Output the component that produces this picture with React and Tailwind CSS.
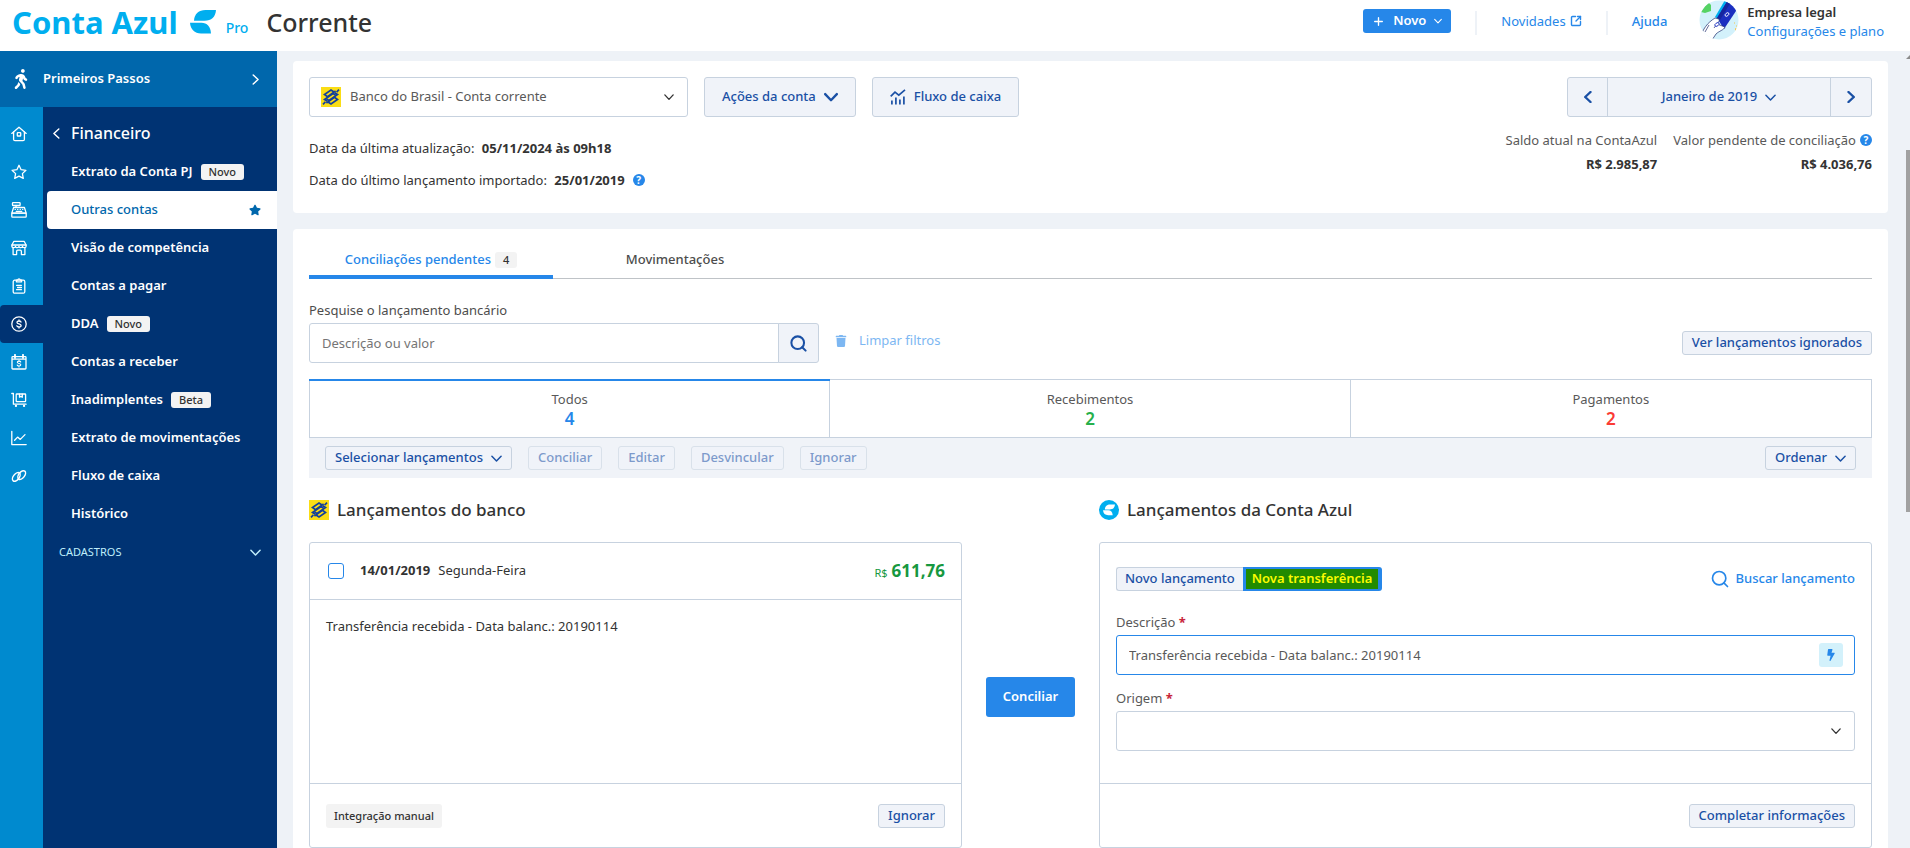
import React, { useState } from 'react';
import { Plus, Search, SquareArrowOutUpRight } from 'lucide-react';
import { FaTrash, FaBolt, FaStar, FaWalking } from 'react-icons/fa';

const RailIcon = ({ children }) => (
    <svg viewBox="0 0 16 16" width="16" height="16" fill="none" stroke="currentColor" strokeWidth="1.3" strokeLinecap="round" strokeLinejoin="round">
        {children}
    </svg>
);

const railItems = [
    {
        label: 'Início',
        icon: <><path d="M.8 7.4 8 1.2l7.2 6.2" /><path d="M2.6 6v7.2c0 .9.5 1.5 1.4 1.5h8c.9 0 1.4-.6 1.4-1.5V6" /><rect x="6.3" y="6.6" width="3.4" height="3.4" rx=".6" /></>
    },
    {
        label: 'Favoritos',
        icon: <path d="M8 1.3l2.1 4.4 4.8.6-3.5 3.3.9 4.8L8 12.1l-4.3 2.3.9-4.8L1.1 6.3l4.8-.6z" />
    },
    {
        label: 'Vendas',
        icon: <><rect x="1.5" y=".7" width="7.6" height="2.8" rx=".6" /><path d="M5 3.5v2M2.6 5.5h10.8l1.8 5.6H.8z" /><rect x=".8" y="11.1" width="14.4" height="4" rx=".7" /><path d="M4.2 7.4h.1M6.7 7.4h.1M9.2 7.4h.1M11.7 7.4h.1M5.2 9.3h5.6" /></>
    },
    {
        label: 'Loja',
        icon: <><path d="M2.9 1.3h10.2l2 3.7v1.2c0 .9-.8 1.5-1.8 1.5s-1.8-.6-1.8-1.5c0 .9-.8 1.5-1.8 1.5S8 7.1 8 6.2c0 .9-.8 1.5-1.8 1.5s-1.7-.6-1.7-1.5c0 .9-.9 1.5-1.9 1.5S.9 7.1.9 6.2V5z" /><path d="M1 5h14M2.1 8v6.6h3.5v-3.2c0-.7.5-1.2 1.2-1.2h2.4c.7 0 1.2.5 1.2 1.2v3.2h3.5V8" /></>
    },
    {
        label: 'Contratos',
        icon: <><rect x="2.2" y="2.2" width="11.6" height="13" rx="1.5" /><path d="M5.4 3.8V2.2h1.3C6.9 1.3 7.3.8 8 .8s1.1.5 1.3 1.4h1.3v1.6zM5.6 7.3h4.8M6.6 9.5h3.8M5.6 11.7h4.8" /></>
    },
    {
        label: 'Financeiro',
        active: true,
        icon: <><circle cx="8" cy="8" r="7.2" /><path d="M10 6.1C9.7 5.4 9 5 8 5 6.9 5 6 5.5 6 6.4c0 2 4.1 1.1 4.1 3.1C10.1 10.5 9.2 11 8 11c-1.1 0-1.9-.5-2.2-1.2M8 4v1M8 11v1" /></>
    },
    {
        label: 'Cobranças',
        icon: <><path d="M1 5.2h14M1.8 2.7h12.4c.5 0 .8.3.8.8v10.7c0 .5-.3.8-.8.8H1.8c-.5 0-.8-.3-.8-.8V3.5c0-.5.3-.8.8-.8z" /><path d="M4 .8v3.2M12 .8v3.2" strokeWidth="1.8" /><path d="M9.7 8c-.2-.6-.8-.9-1.7-.9-1 0-1.7.4-1.7 1.2 0 1.7 3.5.8 3.5 2.5 0 .8-.8 1.2-1.8 1.2-.9 0-1.6-.3-1.8-1M8 6.3v.8M8 12v.9" strokeWidth="1.1" /></>
    },
    {
        label: 'Compras',
        icon: <><path d="M.8 1.5h1.6v10.7h12.7" /><rect x="5.2" y="2" width="9.4" height="7.6" rx=".6" /><path d="M8.5 2.2v3l1.4-.8 1.4.8v-3" /><path d="M4.9 13.9h.1M13 13.9h.1" strokeWidth="2.2" /></>
    },
    {
        label: 'Relatórios',
        icon: <path d="M.8 1.3v13.3h14.4M3.6 10.3l3-3.2 2.7 2.3L14 4.6" />
    },
    {
        label: 'Integrações',
        icon: <><ellipse cx="5.3" cy="8.9" rx="2.9" ry="5" transform="rotate(38 5.3 8.9)" strokeWidth="1.5" /><ellipse cx="10.7" cy="7.1" rx="2.9" ry="5" transform="rotate(38 10.7 7.1)" strokeWidth="1.5" /></>
    }
];

const menuItems = [
    { label: 'Extrato da Conta PJ', badge: 'Novo' },
    { label: 'Outras contas', active: true },
    { label: 'Visão de competência' },
    { label: 'Contas a pagar' },
    { label: 'DDA', badge: 'Novo' },
    { label: 'Contas a receber' },
    { label: 'Inadimplentes', badge: 'Beta' },
    { label: 'Extrato de movimentações' },
    { label: 'Fluxo de caixa' },
    { label: 'Histórico' }
];

const filters = [
    { id: 'todos', label: 'Todos', count: 4, color: 'text-[#2687e9]' },
    { id: 'recebimentos', label: 'Recebimentos', count: 2, color: 'text-[#27b04b]' },
    { id: 'pagamentos', label: 'Pagamentos', count: 2, color: 'text-[#fb3b34]' }
];

const Chevron = ({ className = 'size-[11px]', weight = 1.6 }) => (
    <svg viewBox="0 0 12 12" className={`shrink-0 ${className}`} fill="none" stroke="currentColor" strokeWidth={weight} strokeLinecap="round" strokeLinejoin="round" aria-hidden="true">
        <path d="M1 3.5 6 8.8l5-5.3" />
    </svg>
);

const BankLogo = () => (
    <svg viewBox="0 0 20 20" className="size-5 shrink-0" aria-hidden="true">
        <rect width="20" height="20" fill="#fadd15" />
        <g fill="none" stroke="#123f9b" strokeWidth="1.7">
            <path d="M12.6 4.7 10 3 3.5 7.5l3 2.1L14.6 4" />
            <path d="M7.4 15.3 10 17l6.5-4.5-3-2.1L5.4 16" />
            <path d="M13.8 5.7 16.5 7.5 8 13.4 5.5 11.9" />
            <path d="M6.2 14.3 3.5 12.5 12 6.6l2.5 1.5" />
            <path d="M15.6 5.1 18 2.7M4.4 14.9 2 17.3" />
        </g>
    </svg>
);

const Leaf = ({ className }) => (
    <svg viewBox="0 0 26 24" className={className} fill="currentColor" aria-hidden="true">
        <path d="M26 0H15.5C9 0 4.2 3.8 4 10.8h10.5C21.5 10.8 25.5 6.8 26 0z" />
        <path d="M0 12.8h11.500c5.500 0 9 3.600 9.500 10.700H11C4.500 23.500.5 19.500 0 12.800z" />
    </svg>
);

const Avatar = () => (
    <svg viewBox="0 0 40 40" className="size-10 shrink-0" aria-hidden="true">
        <clipPath id="avatar"><circle cx="20" cy="20" r="19.5" /></clipPath>
        <g clipPath="url(#avatar)">
            <rect width="40" height="40" fill="#d3f1fb" />
            <path d="M2 12 9 2l3 3v6l-6 2z" fill="#56d364" />
            <path d="M16 17 26 0h4L19 19z" fill="#00aeef" />
            <path d="M18 18 29 0l10 8-14 21z" fill="#1c2fc0" />
            <path d="m18 18 11-18 3 2-11 18z" fill="#17259c" />
            <path d="M1 38C4 29 8 23 16 18l4 1c1 2-1 3-2 5l8 3c-1 3-6 4-9 7l-4 6H1z" fill="#fff" stroke="#1d2a6b" strokeWidth=".7" />
            <path d="m10 25-4 7M18 24l-3 4" fill="none" stroke="#1d2a6b" strokeWidth=".7" />
            <ellipse cx="18" cy="24.5" rx="2.4" ry="1.5" fill="#fff" stroke="#1c2fc0" strokeWidth=".9" transform="rotate(-35 18 24.5)" />
            <ellipse cx="28" cy="14.5" rx="2.2" ry="1.4" fill="none" stroke="#fff" strokeWidth=".9" transform="rotate(-40 28 14.5)" />
            <path d="m35 22 1 1-1 1zM37 25l1 1-1 1zM36 28l2 1-2 2z" fill="#f6c445" />
        </g>
    </svg>
);

const ChartIcon = () => (
    <svg viewBox="0 0 16 16" className="size-4" fill="none" stroke="currentColor" strokeWidth="1.7" aria-hidden="true">
        <path d="M.7 7.3 5 3.1l3.8 3L15 .9" />
        <path d="M1.9 15.5v-4M5.9 15.5v-7M9.9 15.5v-5M13.9 15.5v-8" />
    </svg>
);

const HelpDot = () => (
    <button type="button" aria-label="Ajuda" className="flex size-3 items-center justify-center rounded-full bg-[#2687e9] text-[10px] leading-3 font-bold text-white">
        ?
    </button>
);

const SmallButton = ({ children, disabled }) => (
    <button
        type="button"
        disabled={disabled}
        className="flex h-6 items-center gap-2 rounded-[3px] border border-[#c7d2df] bg-[#f0f3f9] px-[9px] font-medium whitespace-nowrap text-[#1a50a5] disabled:border-[#d9e1ea] disabled:text-[#7d9acb]"
    >
        {children}
    </button>
);

const Header = () => (
    <header className="flex h-[51px] shrink-0 items-start bg-white pr-[26px] pl-3">
        <div className="flex items-center text-[#00aeef]">
            <a href="#" className="flex items-center gap-3 text-[31px] leading-[44px] font-bold">
                Conta Azul
                <Leaf className="h-6 w-[26px]" />
            </a>
            <span className="mt-3 ml-2.5 text-sm font-medium">Pro</span>
        </div>
        <h1 className="ml-[18px] text-[25px] leading-[44px] font-medium text-[#333]">Corrente</h1>
        <div className="ml-auto flex items-start">
            <button type="button" className="mt-[9px] flex h-6 items-center gap-2 rounded-[3px] bg-[#2687e9] px-[9px] font-semibold text-white">
                <Plus size={13} strokeWidth={2.5} />
                Novo
                <Chevron className="size-2" />
            </button>
            <span className="mt-[11px] ml-6 h-6 w-0.5 bg-[#eef2f7]" />
            <a href="#" className="mt-[11px] ml-6 flex items-center gap-1 leading-5 text-[#2687e9]">
                Novidades
                <SquareArrowOutUpRight size={12} strokeWidth={2.8} />
            </a>
            <span className="mt-[11px] ml-6 h-6 w-0.5 bg-[#eef2f7]" />
            <a href="#" className="mt-[11px] ml-6 leading-5 font-medium text-[#2687e9]">Ajuda</a>
            <div className="ml-8 flex gap-2">
                <Avatar />
                <div className="pt-[3px] leading-[19px]">
                    <p className="font-semibold text-[#333]">Empresa legal</p>
                    <a href="#" className="text-[#2687e9]">Configurações e plano</a>
                </div>
            </div>
        </div>
    </header>
);

const Sidebar = () => (
    <aside className="flex w-[277px] shrink-0 flex-col font-semibold text-white">
        <a href="#" className="flex h-14 shrink-0 items-center bg-[#0067ac] pr-4 pl-[11px]">
            <FaWalking size={20} />
            <span className="ml-3">Primeiros Passos</span>
            <Chevron className="ml-auto size-[11px] -rotate-90" />
        </a>
        <div className="flex min-h-0 flex-1">
            <nav aria-label="Módulos" className="w-[43px] shrink-0 bg-[#008acf] pt-2">
                {railItems.map(({ label, icon, active }) => (
                    <a
                        key={label}
                        href="#"
                        aria-label={label}
                        className={active ? 'flex h-[38px] items-center rounded-l bg-[#003373] pl-[11px]' : 'flex h-[38px] items-center pl-[11px]'}
                    >
                        <RailIcon>{icon}</RailIcon>
                    </a>
                ))}
            </nav>
            <nav aria-label="Financeiro" className="flex-1 bg-[#003373] pt-2">
                <button type="button" className="flex h-9 items-center gap-[9px] pl-2 text-base font-medium">
                    <Chevron className="size-[11px] rotate-90" />
                    Financeiro
                </button>
                <div className="mt-0.5">
                    {menuItems.map(({ label, badge, active }) => (
                        <a
                            key={label}
                            href="#"
                            className={
                                active
                                    ? 'ml-1 flex h-[38px] items-center rounded-l bg-white pr-4 pl-6 font-medium text-[#0067ac]'
                                    : 'flex h-[38px] items-center gap-2 pl-7'
                            }
                        >
                            {label}
                            {badge && <span className="rounded-[3px] bg-[#f3f3f3] px-2 text-[11px] leading-4 font-medium text-[#333]">{badge}</span>}
                            {active && <FaStar size={12} className="ml-auto" />}
                        </a>
                    ))}
                </div>
                <button type="button" className="flex h-[38px] w-full items-center justify-between pr-4 pl-4 text-[11px] font-normal text-[#bfeefb]">
                    CADASTROS
                    <Chevron className="size-[11px]" />
                </button>
            </nav>
        </div>
    </aside>
);

const AccountCard = () => (
    <section className="flex h-[152px] shrink-0 items-start justify-between rounded bg-white p-4">
        <div>
            <div className="flex gap-4">
                <div className="relative w-[379px]">
                    <select aria-label="Conta" className="h-10 w-full appearance-none rounded-[3px] border border-[#c7d2df] bg-white pr-8 pl-10 text-[#595959]">
                        <option>Banco do Brasil - Conta corrente</option>
                    </select>
                    <span className="pointer-events-none absolute inset-y-0 left-3 flex items-center"><BankLogo /></span>
                    <Chevron className="pointer-events-none absolute inset-y-0 right-3.5 my-auto size-2.5 text-[#333]" />
                </div>
                <button type="button" className="flex h-10 items-center gap-2 rounded-[3px] border border-[#c7d2df] bg-[#f0f3f9] px-[17px] font-medium text-[#1a50a5]">
                    Ações da conta
                    <Chevron className="size-3.5" weight={2} />
                </button>
                <button type="button" className="flex h-10 items-center gap-2 rounded-[3px] border border-[#c7d2df] bg-[#f0f3f9] px-[17px] font-medium text-[#1a50a5]">
                    <ChartIcon />
                    Fluxo de caixa
                </button>
            </div>
            <div className="mt-[15px] leading-8">
                <p>Data da última atualização: <b className="ml-1 font-bold">05/11/2024 às 09h18</b></p>
                <p className="flex items-center gap-2">
                    <span>Data do último lançamento importado: <b className="ml-1 font-bold">25/01/2019</b></span>
                    <HelpDot />
                </p>
            </div>
        </div>
        <div className="flex flex-col items-end">
            <div className="flex h-10 w-[305px] divide-x divide-[#c7d2df] rounded-[3px] border border-[#c7d2df] bg-[#f0f3f9] font-medium text-[#1a50a5]">
                <button type="button" aria-label="Mês anterior" className="flex w-10 items-center justify-center"><Chevron className="size-3 rotate-90" weight={2.4} /></button>
                <button type="button" className="flex flex-1 items-center justify-center gap-2">
                    Janeiro de 2019
                    <Chevron />
                </button>
                <button type="button" aria-label="Próximo mês" className="flex w-10 items-center justify-center"><Chevron className="size-3 -rotate-90" weight={2.4} /></button>
            </div>
            <dl className="mt-[11px] flex gap-4 text-right leading-6">
                <div>
                    <dt className="text-[#595959]">Saldo atual na ContaAzul</dt>
                    <dd className="font-bold">R$ 2.985,87</dd>
                </div>
                <div>
                    <dt className="flex items-center gap-1 text-[#595959]">Valor pendente de conciliação <HelpDot /></dt>
                    <dd className="font-bold">R$ 4.036,76</dd>
                </div>
            </dl>
        </div>
    </section>
);

const BankEntry = () => (
    <article className="rounded-[3px] border border-[#c7d2df]">
        <div className="flex h-[57px] items-center border-b border-[#c7d2df] pr-4 pl-[18px]">
            <input type="checkbox" id="entry" className="size-4 appearance-none rounded-[3px] border border-[#2687e9] bg-white checked:bg-[#2687e9]" />
            <label htmlFor="entry" className="ml-4"><b className="mr-2 font-bold">14/01/2019</b>Segunda-Feira</label>
            <p className="ml-auto flex items-baseline gap-1 text-[#17983f]">
                <span className="text-[11px]">R$</span>
                <b className="text-[17px] font-bold">611,76</b>
            </p>
        </div>
        <div className="h-[184px] border-b border-[#c7d2df] p-4">
            <p className="leading-5">Transferência recebida - Data balanc.: 20190114</p>
        </div>
        <div className="flex h-[63px] items-center justify-between px-4">
            <span className="rounded-[3px] bg-[#f3f3f3] px-2 text-[11px] leading-6 font-medium">Integração manual</span>
            <SmallButton>Ignorar</SmallButton>
        </div>
    </article>
);

const ContaAzulEntry = () => {
    const [description, setDescription] = useState('Transferência recebida - Data balanc.: 20190114');

    return (
        <article className="rounded-[3px] border border-[#c7d2df]">
            <div className="h-[241px] border-b border-[#c7d2df] px-4 pt-6">
                <div className="flex h-6 items-center justify-between">
                    <div className="flex h-6 font-medium">
                        <button type="button" className="rounded-l-[3px] border border-r-0 border-[#c7d2df] bg-[#f0f3f9] px-2 text-[#1a50a5]">Novo lançamento</button>
                        <button type="button" className="flex rounded-r-[3px] bg-[#2687e9] py-0.5 pr-1 pl-[3px] font-semibold text-[#fcfc00]">
                            <span className="flex h-5 items-center bg-[#228b00] px-1.5">Nova transferência</span>
                        </button>
                    </div>
                    <button type="button" className="flex items-center gap-1.5 font-medium text-[#2687e9]">
                        <Search size={20} strokeWidth={2} />
                        Buscar lançamento
                    </button>
                </div>
                <label htmlFor="description" className="mt-[21px] block leading-5 text-[#595959]">Descrição <span className="font-bold text-[#c8253a]">*</span></label>
                <div className="relative mt-[3px]">
                    <input
                        id="description"
                        type="text"
                        value={description}
                        onChange={e => setDescription(e.target.value)}
                        className="h-10 w-full rounded-[3px] border border-[#2687e9] pr-12 pl-3 text-[#595959]"
                    />
                    <span className="absolute inset-y-0 right-3 my-auto flex size-6 items-center justify-center rounded-[3px] bg-[#d3f1fb] text-[#2687e9]"><FaBolt size={12} /></span>
                </div>
                <label htmlFor="origin" className="mt-[13px] block leading-5 text-[#595959]">Origem <span className="font-bold text-[#c8253a]">*</span></label>
                <div className="relative mt-[3px]">
                    <select id="origin" className="h-10 w-full appearance-none rounded-[3px] border border-[#c7d2df] bg-white px-3">
                        <option></option>
                    </select>
                    <Chevron className="pointer-events-none absolute inset-y-0 right-3.5 my-auto size-2.5 text-[#333]" />
                </div>
            </div>
            <div className="flex h-[63px] items-center justify-end px-4">
                <SmallButton>Completar informações</SmallButton>
            </div>
        </article>
    );
};

const Reconciliation = () => {
    const [filter, setFilter] = useState('todos');

    return (
        <section className="rounded bg-white px-4 pb-4">
            {/* Tabs */}
            <div className="flex h-[50px] font-medium shadow-[inset_0_-1px_0_#bfc3c7]">
                <button type="button" className="flex w-[244px] items-center justify-center gap-1 border-b-4 border-[#2687e9] pt-4 text-[#2687e9]">
                    Conciliações pendentes
                    <span className="rounded-[3px] bg-[#f3f3f3] px-2 text-[11px] leading-4 text-[#333]">4</span>
                </button>
                <button type="button" className="flex w-[244px] items-center justify-center border-b-4 border-transparent pt-4 text-[#4d4d4d]">Movimentações</button>
            </div>

            {/* Search */}
            <label htmlFor="search" className="mt-[21px] block leading-5 text-[#4d4d4d]">Pesquise o lançamento bancário</label>
            <div className="mt-[3px] flex h-10 items-center">
                <input id="search" type="text" placeholder="Descrição ou valor" className="h-10 w-[470px] rounded-l-[3px] border border-[#c7d2df] px-3 placeholder:text-[#757575]" />
                <button type="button" aria-label="Pesquisar" className="-ml-px flex h-10 w-[41px] items-center justify-center rounded-r-[3px] border border-[#c7d2df] bg-[#f0f3f9] text-[#1a50a5]">
                    <Search size={19} strokeWidth={2.6} />
                </button>
                <button type="button" className="mb-1 ml-4 flex items-center gap-3 text-[#7db7f2]">
                    <FaTrash size={12} />
                    Limpar filtros
                </button>
                <div className="ml-auto"><SmallButton>Ver lançamentos ignorados</SmallButton></div>
            </div>

            {/* Totals */}
            <div className="mt-4 grid h-[59px] grid-cols-3 divide-x divide-[#c7d2df] border border-[#c7d2df]">
                {filters.map(({ id, label, count, color }) => (
                    <button
                        key={id}
                        type="button"
                        onClick={() => setFilter(id)}
                        className={filter === id ? 'relative before:absolute before:-inset-x-px before:-top-px before:h-0.5 before:bg-[#2687e9]' : 'relative'}
                    >
                        <span className="block leading-5 text-[#595959]">{label}</span>
                        <span className={`block text-[17px] leading-5 font-semibold ${color}`}>{count}</span>
                    </button>
                ))}
            </div>
            <div className="flex h-10 items-center gap-4 bg-[#f0f3f8] px-4">
                <SmallButton>Selecionar lançamentos <Chevron /></SmallButton>
                <SmallButton disabled>Conciliar</SmallButton>
                <SmallButton disabled>Editar</SmallButton>
                <SmallButton disabled>Desvincular</SmallButton>
                <SmallButton disabled>Ignorar</SmallButton>
                <div className="ml-auto"><SmallButton>Ordenar <Chevron /></SmallButton></div>
            </div>

            {/* Entries */}
            <div className="mt-[22px] grid grid-cols-[minmax(0,653fr)_137px_minmax(0,773fr)] gap-y-[22px]">
                <h2 className="flex h-5 items-center gap-2 text-[17px] font-medium"><BankLogo /> Lançamentos do banco</h2>
                <h2 className="col-start-3 flex h-5 items-center gap-2 text-[17px] font-medium">
                    <span className="flex size-5 items-center justify-center rounded-full bg-[#00aeef] text-white"><Leaf className="h-3 w-3" /></span>
                    Lançamentos da Conta Azul
                </h2>
                <BankEntry />
                <div className="flex items-center justify-center pt-1">
                    <button type="button" className="h-10 rounded-[3px] bg-[#2687e9] px-[17px] font-semibold text-white">Conciliar</button>
                </div>
                <ContaAzulEntry />
            </div>
        </section>
    );
};

const App = () => (
    <div className="flex h-screen flex-col overflow-hidden bg-[#eef2f7] font-['Noto_Sans',sans-serif] text-[13px] text-[#333]">
        <Header />
        <div className="flex min-h-0 flex-1">
            <Sidebar />
            <main className="flex min-w-0 flex-1 flex-col gap-4 overflow-hidden pt-2.5 pr-[18px] pl-4">
                <AccountCard />
                <Reconciliation />
            </main>
            <div className="flex w-1 shrink-0 flex-col gap-[91px] pt-1" aria-hidden="true">
                <svg viewBox="0 0 4 4" className="size-1 shrink-0"><path d="M4 0v4H0z" fill="#8b8b8b" /></svg>
                <div className="h-[362px] shrink-0 bg-[#a1a1a1]" />
            </div>
        </div>
    </div>
);

export default App;
